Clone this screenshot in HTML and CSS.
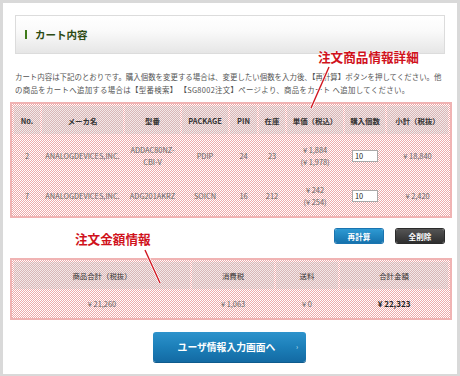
FILE: index.html
```html
<!DOCTYPE html>
<html lang="ja">
<head>
    <meta charset="UTF-8">
    <title>カート内容</title>
    <link rel="stylesheet" href="styles.css">
</head>
<body>
    <div class="frame">
        <div class="page-title"><span class="bar"></span>カート内容</div>

        <p class="lead">カート内容は下記のとおりです。購入個数を変更する場合は、変更したい個数を入力後、【再計算】ボタンを押してください。他<br><span class="wide">の商品をカートへ追加する場合は【型番検索】 【SG8002注文】ページより、商品をカート へ追加してください。</span></p>

        <table class="cart">
            <tr>
                <th class="c-no">No.</th>
                <th class="c-maker">メーカ名</th>
                <th class="c-part">型番</th>
                <th class="c-pkg">PACKAGE</th>
                <th class="c-pin">PIN</th>
                <th class="c-stock">在庫</th>
                <th class="c-price">単価（税込）</th>
                <th class="c-qty">購入個数</th>
                <th class="c-sub">小計（税抜）</th>
            </tr>
            <tr class="row1">
                <td>2</td>
                <td>ANALOGDEVICES,INC.</td>
                <td>ADDAC80NZ-<br>CBI-V</td>
                <td>PDIP</td>
                <td>24</td>
                <td>23</td>
                <td>¥ 1,884<br>(¥ 1,978)</td>
                <td><input class="qty" type="text" value="10"></td>
                <td>¥ 18,840</td>
            </tr>
            <tr class="row2">
                <td>7</td>
                <td>ANALOGDEVICES,INC.</td>
                <td>ADG201AKRZ</td>
                <td>SOICN</td>
                <td>16</td>
                <td>212</td>
                <td>¥ 242<br>(¥ 254)</td>
                <td><input class="qty" type="text" value="10"></td>
                <td>¥ 2,420</td>
            </tr>
        </table>

        <div class="actions">
            <button class="btn-small btn-blue">再計算</button>
            <button class="btn-small btn-dark">全削除</button>
        </div>

        <table class="summary">
            <tr>
                <th class="s-goods">商品合計（税抜）</th>
                <th class="s-tax">消費税</th>
                <th class="s-ship">送料</th>
                <th class="s-total">合計金額</th>
            </tr>
            <tr>
                <td>¥ 21,260</td>
                <td>¥ 1,063</td>
                <td>¥ 0</td>
                <td class="total">¥ 22,323</td>
            </tr>
        </table>

        <div class="next">
            <button class="btn-next">ユーザ情報入力画面へ<span class="arrow">›</span></button>
        </div>

        <!-- annotations -->
        <div class="note note-detail">注文商品情報詳細</div>
        <div class="note note-amount">注文金額情報</div>
        <svg class="lines" width="460" height="376" viewBox="0 0 460 376">
            <line x1="329" y1="67" x2="311" y2="108" stroke="#fff" stroke-width="3"/>
            <line x1="329" y1="67" x2="311" y2="108" stroke="#d11822" stroke-width="1.4"/>
            <line x1="145" y1="250" x2="160" y2="283" stroke="#fff" stroke-width="3"/>
            <line x1="145" y1="250" x2="160" y2="283" stroke="#d11822" stroke-width="1.4"/>
        </svg>
    </div>
</body>
</html>
```

FILE: styles.css
```css
body {
    margin: 0;
    font-family: "Noto Sans CJK JP", "Noto Sans", sans-serif;
    background: #fff;
}
.frame {
    position: relative;
    box-sizing: border-box;
    width: 460px;
    height: 376px;
    border: 3px solid #d9d9d9;
    border-bottom-width: 2px;
    padding-top: 12px;
    overflow: hidden;
}
.page-title {
    display: flex;
    align-items: center;
    margin: 0 12px;
    height: 37px;
    border: 1px solid #dcdcdc;
    background: linear-gradient(#fff, #fafafa 40%, #e6e6e6);
    font-size: 10.5px;
    font-weight: bold;
    color: #2c4a12;
}
.bar {
    width: 2px;
    height: 9px;
    background: #3f7a1a;
    margin: 0 8px 0 9px;
}
.lead {
    margin: 16px 0 0 12px;
    font-size: 7.45px;
    line-height: 13px;
    color: #555;
    white-space: nowrap;
}
.wide {
    letter-spacing: 0.3px;
}
table {
    border-collapse: separate;
    border-spacing: 2px;
    table-layout: fixed;
    border: 2px solid #f0b3b3;
    background: repeating-conic-gradient(#eeaaaa 0 25%, #fff 0 50%) 0 0 / 2px 2px fixed;
    font-size: 7.4px;
    color: #666;
    text-align: center;
}
th {
    background: repeating-conic-gradient(#d9b6b6 0 25%, #f3e9e9 0 50%) 0 0 / 2px 2px fixed;
    color: #333;
    font-weight: bold;
    padding: 0;
}
td {
    padding: 0;
    line-height: 12px;
}
.cart {
    margin: 6px 0 0 7px;
    width: 442px;
}
.cart th {
    height: 28px;
}
.cart .row1 td {
    height: 40px;
}
.cart .row2 td {
    height: 36px;
}
.c-no { width: 26px; }
.c-maker { width: 81px; }
.c-part { width: 55px; }
.c-pkg { width: 46px; }
.c-pin { width: 27px; }
.c-stock { width: 26px; }
.c-price { width: 56px; }
.c-qty { width: 40px; }
.qty {
    box-sizing: border-box;
    width: 26px;
    height: 12px;
    padding: 0 2px;
    border: 1px solid #a9a9a9;
    background: #fff;
    font-family: "Noto Sans CJK JP", sans-serif;
    font-size: 7.4px;
    color: #222;
    text-align: left;
}
.actions {
    display: flex;
    justify-content: flex-end;
    gap: 13px;
    margin: 11px 13px 0 0;
}
.btn-small {
    width: 48px;
    height: 14px;
    border: none;
    border-radius: 2px;
    padding: 0;
    color: #fff;
    font-family: "Noto Sans CJK JP", sans-serif;
    font-size: 7.6px;
    font-weight: bold;
}
.btn-blue {
    background: linear-gradient(#2e9ad3, #1572ad);
    box-shadow: 0 0 0 1px #1a74b0;
}
.btn-dark {
    background: linear-gradient(#555, #2e2e2e);
    box-shadow: 0 0 0 1px #2b2b2b;
}
.summary {
    margin: 15px 0 0 7px;
    width: 442px;
}
.summary th {
    height: 27px;
    font-weight: normal;
}
.summary td {
    height: 25px;
}
.s-goods { width: 176px; }
.s-tax { width: 82px; }
.s-ship { width: 62px; }
.summary .total {
    font-weight: bold;
    color: #222;
    font-size: 8px;
}
.next {
    margin: 12px 0 0 150px;
}
.btn-next {
    position: relative;
    width: 153px;
    height: 30px;
    border: none;
    border-radius: 3px;
    background: linear-gradient(#2d93cc, #1c7fb9 50%, #136aa3);
    box-shadow: 0 1px 0 #0f5b8d;
    color: #fff;
    font-family: "Noto Sans CJK JP", sans-serif;
    font-size: 9.8px;
    font-weight: bold;
    padding: 0 6px 0 0;
}
.arrow {
    position: absolute;
    right: 8px;
    top: 9px;
    font-size: 7px;
    font-weight: normal;
    color: #cde6f5;
}
.note {
    position: absolute;
    color: #d0121c;
    font-weight: bold;
    font-size: 12.6px;
    line-height: 14px;
    text-shadow: 0 0 2px #fff, 0 0 2px #fff;
}
.note-detail {
    left: 315px;
    top: 47px;
}
.note-amount {
    left: 72px;
    top: 229px;
}
.lines {
    position: absolute;
    left: -3px;
    top: -3px;
    pointer-events: none;
}
```
